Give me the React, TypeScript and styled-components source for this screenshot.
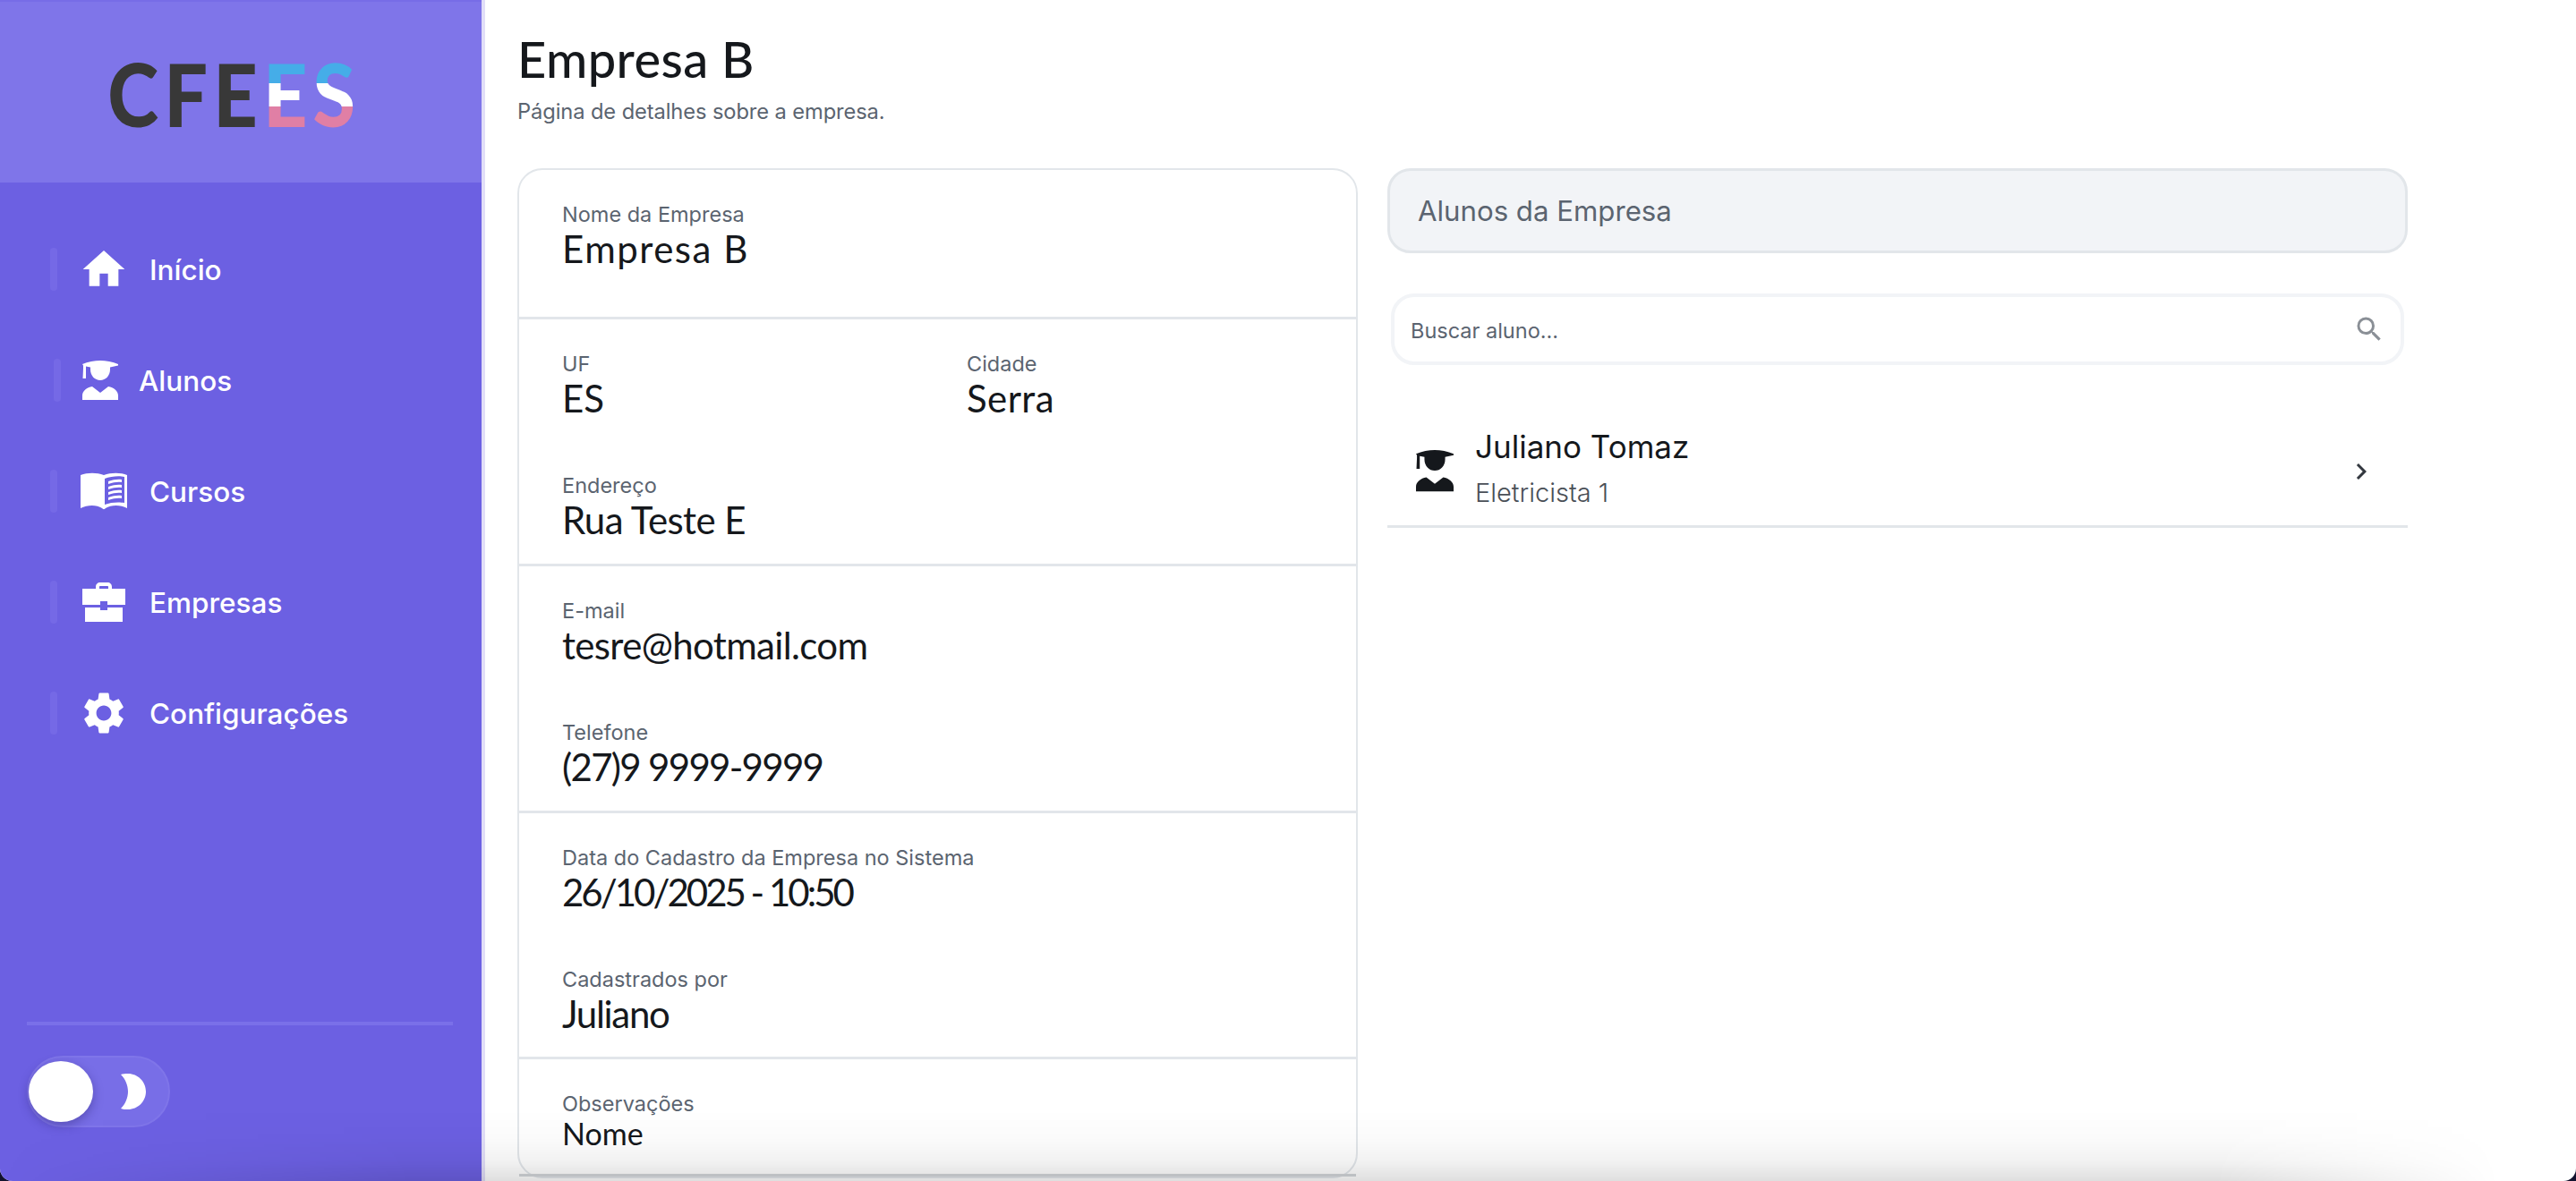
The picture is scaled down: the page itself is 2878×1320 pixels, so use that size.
import React from "react";
import styled, { createGlobalStyle } from "styled-components";
import { MdHome, MdSettings, MdSearch, MdChevronRight } from "react-icons/md";

const Global = createGlobalStyle`
  html, body { margin: 0; padding: 0; height: 100%; background: #12122e; }
  #root { height: 100%; }
  * { box-sizing: border-box; }
`;

const Page = styled.div`
  position: relative;
  display: flex;
  width: 2878px;
  height: 1320px;
  overflow: hidden;
  background: #fff;
  border-radius: 0 0 14px 14px;
  font-family: "Inter", "Liberation Sans", sans-serif;
`;

const Sidebar = styled.aside`
  width: 542px;
  flex: none;
  display: flex;
  flex-direction: column;
  background: #6c60e2;
  border-right: 4px solid #e1def8;
`;

const Brand = styled.div`
  height: 204px;
  flex: none;
  display: flex;
  align-items: center;
  justify-content: center;
  padding: 2px 0 0 0;
  background: #7f75e9;
  border-top: 2px solid #776ce6;
`;

const Logo = styled.div`
  display: flex;
  margin-right: 14px;
  transform: scaleX(0.88);
  filter: blur(0.5px);
`;

const LogoDark = styled.span`
  font-family: "Lato", sans-serif;
  font-weight: 900;
  font-size: 98px;
  line-height: 1;
  letter-spacing: 7px;
  color: #383838;
`;

const LogoFlag = styled(LogoDark)`
  background: linear-gradient(180deg, #45ade8 0 39%, #fff 39% 65%, #e07fa5 65% 100%);
  -webkit-background-clip: text;
  background-clip: text;
  color: transparent;
`;

const Nav = styled.nav`
  display: flex;
  flex-direction: column;
  gap: 76px;
  padding: 73px 0 0 56px;
`;

const NavItem = styled.div<{ $shift?: number }>`
  display: flex;
  align-items: center;
  height: 48px;
  color: #fff;
  font-size: 31.5px;
  font-weight: 500;
  margin-left: ${(p) => p.$shift ?? 0}px;
`;

const NavBar = styled.span`
  width: 8px;
  height: 48px;
  flex: none;
  border-radius: 4px;
  background: #7569e6;
`;

const NavIcon = styled.span<{ $width?: number }>`
  width: ${(p) => p.$width ?? 56}px;
  flex: none;
  margin: 0 23px 0 24px;
  display: flex;
  align-items: center;
  justify-content: center;
  svg { display: block; }
`;

const SideFooter = styled.div`
  margin-top: auto;
  padding: 0 32px 60px 30px;
`;

const SideRule = styled.div`
  height: 4px;
  background: #7a70e9;
  margin-bottom: 34px;
`;

const Toggle = styled.div`
  width: 160px;
  height: 80px;
  display: flex;
  align-items: center;
  border-radius: 40px;
  background: #786ee7;
  border: 2px solid #7f75e9;
`;

const Knob = styled.span`
  width: 72px;
  height: 68px;
  flex: none;
  border-radius: 50%;
  background: #fff;
  box-shadow: 0 4px 12px rgba(30, 20, 90, 0.35);
`;

const Moon = styled.svg`
  width: 28px;
  height: 40px;
  margin-left: 31px;
  flex: none;
`;

const Main = styled.main`
  flex: 1;
  min-width: 0;
  padding: 36px 188px 0 36px;
  display: flex;
  flex-direction: column;
`;

const Title = styled.h1`
  margin: 0;
  font-family: "Lato", sans-serif;
  font-weight: 500;
  font-size: 56px;
  line-height: 60px;
  color: #15181c;
  letter-spacing: 0.4px;
`;

const Subtitle = styled.p`
  margin: 14px 0 0;
  font-size: 23.7px;
  line-height: 30px;
  letter-spacing: -0.1px;
  color: #5b6470;
`;

const Columns = styled.div`
  display: grid;
  grid-template-columns: 939px 1140px;
  gap: 33px;
  margin-top: 48px;
  align-items: start;
`;

const Card = styled.section`
  height: 1129px;
  border: 2px solid #e2e6ea;
  border-radius: 28px;
  display: flex;
  flex-direction: column;
`;

const Group = styled.div<{ $height: number; $last?: boolean }>`
  height: ${(p) => p.$height}px;
  flex: none;
  padding: 37px 48px 0;
  display: flex;
  flex-direction: column;
  gap: 62px;
  border-bottom: 3px solid ${(p) => (p.$last ? "#d3d6da" : "#e2e6ea")};
`;

const Pair = styled.div`
  display: grid;
  grid-template-columns: 452px 1fr;
`;

const Field = styled.div`
  display: flex;
  flex-direction: column;
`;

const Label = styled.span`
  font-size: 23.5px;
  line-height: 28px;
  margin-top: -1px;
  color: #5b6470;
`;

const Value = styled.span<{ $small?: boolean; $track?: number }>`
  font-family: "Lato", sans-serif;
  font-size: ${(p) => (p.$small ? 34 : 42)}px;
  line-height: ${(p) => (p.$small ? 36 : 46)}px;
  margin-top: ${(p) => (p.$small ? 1 : 1)}px;
  color: #15181c;
  letter-spacing: ${(p) => p.$track ?? 0}px;
`;

const Panel = styled.section`
  display: flex;
  flex-direction: column;
`;

const PanelHeader = styled.div`
  height: 95px;
  display: flex;
  align-items: center;
  padding: 0 31px;
  background: #f2f4f7;
  border: 3px solid #e2e6ea;
  border-radius: 26px;
  font-size: 31.2px;
  color: #5b6470;
`;

const Search = styled.div`
  height: 80px;
  margin: 45px 4px 0;
  display: flex;
  align-items: center;
  justify-content: space-between;
  padding: 0 17px 0 18px;
  border: 4px solid #f2f4f7;
  border-radius: 26px;
  font-size: 23.5px;
  color: #5b6470;
  span { padding-top: 2px; }
  svg { color: #8a8f96; display: block; }
`;

const StudentRow = styled.div`
  height: 136px;
  margin-top: 46px;
  display: flex;
  align-items: center;
  padding: 4px 34px 0 32px;
  border-bottom: 3px solid #e2e6ea;
  > svg { flex: none; display: block; margin-top: 8px; }
`;

const StudentText = styled.div`
  flex: 1;
  display: flex;
  flex-direction: column;
  margin-left: 24px;
`;

const StudentName = styled.span`
  font-size: 35px;
  line-height: 44px;
  color: #15181c;
`;

const StudentRole = styled.span`
  font-size: 29px;
  line-height: 36px;
  margin-top: 12px;
  color: #4a4f57;
  font-weight: 300;
`;

const BottomFade = styled.div`
  position: absolute;
  left: 0;
  right: 0;
  bottom: 0;
  height: 80px;
  pointer-events: none;
  background: linear-gradient(180deg, rgba(0, 0, 0, 0) 0%, rgba(0, 0, 0, 0.015) 40%, rgba(0, 0, 0, 0.05) 72%, rgba(0, 0, 0, 0.125) 100%);
  mask-image: linear-gradient(90deg, transparent 0, #000 16%, #000 86%, transparent 97%);
`;

const Graduate = ({ size, color }: { size: number; color: string }) => (
  <svg width={size} height={size * 1.1} viewBox="0 0 40 44" fill={color}>
    <path d="M20 0 C26 0 34 1.5 40 4 V5.5 L31 7.5 V10 C31 17 26 22 20 22 C14 22 9 17 9 10 V7.5 L4 6.5 V20 H0.5 L1 8.5 V5.5 L0 4 C6 1.5 14 0 20 0 Z" />
    <path d="M11 29 L20 36 L29 29 C35 30 40 34 40 39 V44 H0 V39 C0 34 5 30 11 29 Z" />
  </svg>
);

const Book = () => (
  <svg width="52" height="42" viewBox="0 0 52 42" fill="#fff" fillRule="evenodd">
    <path d="M0 3 C8 0 18 0 26 3 C34 0 45 0 52 3 V40 C45 36 34 36 28 40 C27 41.5 25 41.5 24 40 C18 36 8 36 0 40 Z M27 7 V36 C34 33 44 33 49 34 V5 C44 3.5 34 4 27 7 Z" />
    <path d="M31 10 C37 8 41 7.5 46 8 V11 C41 10.5 37 11 31 13 Z M31 16 C37 14 41 13.5 46 14 V17 C41 16.5 37 17 31 19 Z M31 22 C37 20 41 19.5 46 20 V23 C41 22.5 37 23 31 25 Z M31 28 C37 26 41 25.5 46 26 V29 C41 28.5 37 29 31 31 Z" />
  </svg>
);

const Briefcase = () => (
  <svg width="48" height="44" viewBox="0 0 48 44" fill="#fff" fillRule="evenodd">
    <path d="M15 7 V5 C15 2 17 0 20 0 H28 C31 0 33 2 33 5 V7 H48 V25 H28 V21 H20 V25 H0 V7 Z M19 7 H29 V5 C29 4.4 28.6 4 28 4 H20 C19.4 4 19 4.4 19 5 Z" />
    <path d="M3 28 H20 V31 H28 V28 H45 V44 H3 Z" />
  </svg>
);

const items = [
  { label: "Início", icon: <MdHome size={56} /> },
  { label: "Alunos", icon: <Graduate size={40} color="#fff" />, shift: 4, width: 40 },
  { label: "Cursos", icon: <Book /> },
  { label: "Empresas", icon: <Briefcase /> },
  { label: "Configurações", icon: <MdSettings size={58} /> },
];

export default function App() {
  return (
    <Page>
      <Global />
      <Sidebar>
        <Brand>
          <Logo>
            <LogoDark>CFE</LogoDark>
            <LogoFlag>ES</LogoFlag>
          </Logo>
        </Brand>
        <Nav>
          {items.map((item) => (
            <NavItem key={item.label} $shift={item.shift}>
              <NavBar />
              <NavIcon $width={item.width}>{item.icon}</NavIcon>
              <span>{item.label}</span>
            </NavItem>
          ))}
        </Nav>
        <SideFooter>
          <SideRule />
          <Toggle>
            <Knob />
            <Moon viewBox="0 0 28 40" fill="#fff">
              <path d="M0 1 C2 0 5 0 8 0 C19 0 28 9 28 20 C28 31 19 40 8 40 C5 40 2 40 0 39 C5 34 8 27 8 20 C8 13 5 6 0 1 Z" />
            </Moon>
          </Toggle>
        </SideFooter>
      </Sidebar>
      <Main>
        <Title>Empresa B</Title>
        <Subtitle>Página de detalhes sobre a empresa.</Subtitle>
        <Columns>
          <Card>
            <Group $height={167}>
              <Field>
                <Label>Nome da Empresa</Label>
                <Value $track={1.5}>Empresa B</Value>
              </Field>
            </Group>
            <Group $height={276}>
              <Pair>
                <Field>
                  <Label>UF</Label>
                  <Value>ES</Value>
                </Field>
                <Field>
                  <Label>Cidade</Label>
                  <Value $track={0.4}>Serra</Value>
                </Field>
              </Pair>
              <Field>
                <Label>Endereço</Label>
                <Value $track={-0.6}>Rua Teste E</Value>
              </Field>
            </Group>
            <Group $height={276}>
              <Field>
                <Label>E-mail</Label>
                <Value $track={-0.65}>tesre@hotmail.com</Value>
              </Field>
              <Field>
                <Label>Telefone</Label>
                <Value $track={-1.7}>(27)9 9999-9999</Value>
              </Field>
            </Group>
            <Group $height={275}>
              <Field>
                <Label>Data do Cadastro da Empresa no Sistema</Label>
                <Value $track={-3}>26/10/2025 - 10:50</Value>
              </Field>
              <Field>
                <Label>Cadastrados por</Label>
                <Value $track={-1.3}>Juliano</Value>
              </Field>
            </Group>
            <Group $height={131} $last>
              <Field>
                <Label>Observações</Label>
                <Value $small>Nome</Value>
              </Field>
            </Group>
          </Card>
          <Panel>
            <PanelHeader>Alunos da Empresa</PanelHeader>
            <Search>
              <span>Buscar aluno...</span>
              <MdSearch size={36} />
            </Search>
            <StudentRow>
              <Graduate size={42} color="#15181c" />
              <StudentText>
                <StudentName>Juliano Tomaz</StudentName>
                <StudentRole>Eletricista 1</StudentRole>
              </StudentText>
              <MdChevronRight size={36} color="#33383f" />
            </StudentRow>
          </Panel>
        </Columns>
      </Main>
      <BottomFade />
    </Page>
  );
}
